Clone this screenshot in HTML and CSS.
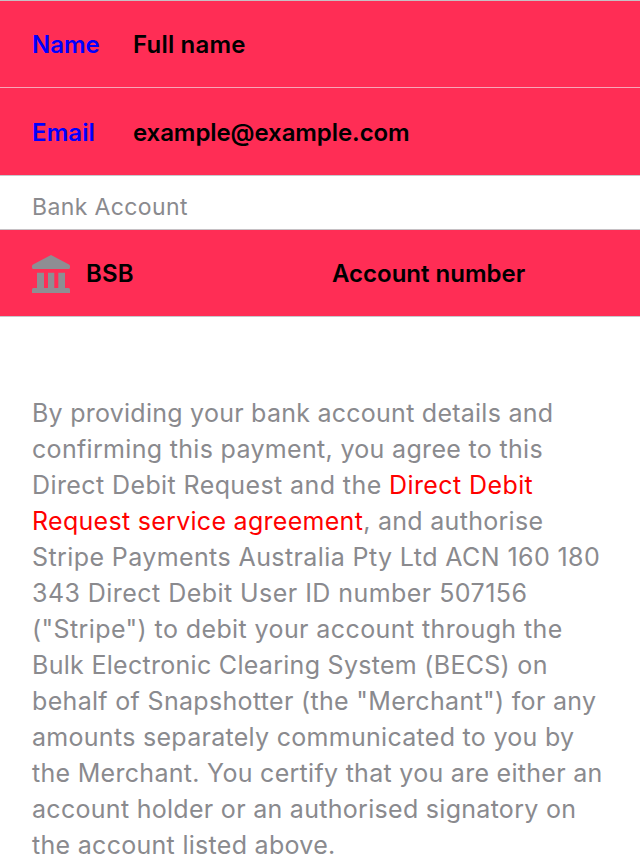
FILE: index.html
```html
<!DOCTYPE html>
<html lang="en">
<head>
<meta charset="utf-8">
<title>Direct Debit</title>
<link rel="stylesheet" href="styles.css">
</head>
<body>
<main class="form">
  <div class="row name-row"><span class="label">Name</span><span class="full-name">Full name</span></div>
  <div class="row email-row"><span class="label email">Email</span><span class="address">example@example.com</span></div>
  <h2 class="heading">Bank Account</h2>
  <div class="row bank-row">
    <svg class="bank" viewBox="0 0 38 38" width="38" height="38"><path d="M19 0L37 9.500Q38 10 38 11V12.500Q38 14 36.500 14H1.500Q0 14 0 12.500V11Q0 10 1 9.500ZM5 17.700H12V33H16V17.700H22.300V33H26.300V17.700H33V33H36.500Q38 33 38 34.500V38H0V34.500Q0 33 1.500 33H5Z"/></svg>
    <span class="bsb">BSB</span><span class="account">Account number</span>
  </div>
  <p class="mandate">
    <span class="line snug">By providing your bank account details and</span>
    <span class="line mid">confirming this payment, you agree to this</span>
    <span class="line wide">Direct Debit Request and the <a>Direct Debit</a></span>
    <span class="line"><a>Request service agreement</a>, and authorise</span>
    <span class="line wide">Stripe Payments Australia Pty Ltd ACN 160 180</span>
    <span class="line widest">343 Direct Debit User ID number 507156</span>
    <span class="line wide">("Stripe") to debit your account through the</span>
    <span class="line">Bulk Electronic Clearing System (BECS) on</span>
    <span class="line mid">behalf of Snapshotter (the "Merchant") for any</span>
    <span class="line">amounts separately communicated to you by</span>
    <span class="line">the Merchant. You certify that you are either an</span>
    <span class="line">account holder or an authorised signatory on</span>
    <span class="line">the account listed above.</span>
  </p>
</main>
</body>
</html>
```
FILE: styles.css
```css
* { box-sizing: border-box; }
body { margin: 0; background: #fff; color: #000; font-family: Inter, sans-serif; overflow: hidden; }
.form { height: 865px; overflow: hidden; }
.row { display: flex; align-items: center; padding: 0 32px; background: #ff2d55; border-top: 1px solid #c6c0c4; font-size: 24px; font-weight: 600; white-space: nowrap; }
.name-row { height: 87px; padding-top: 1px; }
.email-row { height: 89px; padding-top: 2px; border-top-color: #f7a6b8; border-bottom: 1px solid #c8c7cc; }
.label { width: 101px; color: #00f; }
.email { letter-spacing: 0.1px; }
.full-name { letter-spacing: 0.2px; }
.address { letter-spacing: -0.08px; }
.heading { margin: 0; height: 53px; padding: 15px 32px 0; font-size: 23px; line-height: 32px; font-weight: 400; letter-spacing: 0.38px; color: #8a8a8e; }
.bank-row { height: 88px; border-bottom: 1px solid #c8c7cc; }
.bank { fill: #8e8e93; position: relative; top: 1px; }
.bsb { width: 246px; margin-left: 16px; letter-spacing: 0.2px; }
.mandate { margin: 78px 0 0 32px; font-size: 25px; line-height: 36px; color: #8a8a8e; white-space: nowrap; }
.line { display: block; letter-spacing: 0.29px; }
.snug { letter-spacing: 0.25px; }
.mid { letter-spacing: 0.32px; }
.wide { letter-spacing: 0.4px; }
.widest { letter-spacing: 0.45px; }
.mandate a { color: #f00; }
```
